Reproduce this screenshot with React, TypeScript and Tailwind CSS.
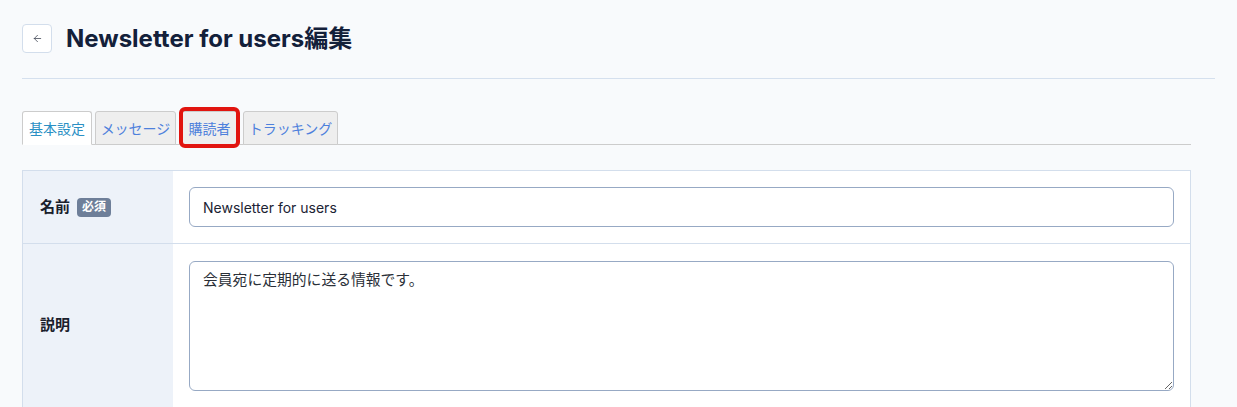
import { ArrowLeft } from 'lucide-react';

const font = { fontFamily: 'Inter, "Noto Sans CJK JP", sans-serif' };

const tabs = [
  { label: '基本設定', w: 'w-[70px]' },
  { label: 'メッセージ', w: 'w-[81px]' },
  { label: '購読者', w: 'w-[61px]' },
  { label: 'トラッキング', w: 'w-[95px]' },
];

export default function App() {
  return (
    <div className="min-h-screen bg-[#f8fafc] text-[#1a2233]" style={font}>
      <div className="px-[22px] pt-[24px]">
        {/* Header */}
        <div className="flex items-center gap-[14px] pb-[25px] border-b border-[#d5e0ee]">
          <button className="w-[30px] h-[29px] flex items-center justify-center bg-white border border-[#d3deec] rounded-[4px]">
            <ArrowLeft className="w-[11px] h-[11px] text-[#333a48]" strokeWidth={1.6} />
          </button>
          <h1 className="text-[24px] font-bold text-[#13203a] tracking-[0px] leading-[29px]">Newsletter for users編集</h1>
        </div>

        <div className="mr-[24px]">
          {/* Tabs */}
          <div className="mt-[32px] flex items-end gap-[3px] border-b border-[#cccccc] h-[34px]">
            {tabs.map((t, i) => (
              <div key={t.label} className={`relative ${t.w}`}>
                {i === 0 ? (
                  <div className="h-[34px] -mb-px flex items-center justify-center bg-white border border-[#cccccc] border-b-white rounded-t-[3px] text-[14px] text-[#2a8fc4]">
                    {t.label}
                  </div>
                ) : (
                  <div className="h-[34px] -mb-px flex items-center justify-center bg-[#eeeeee] border border-[#cccccc] rounded-t-[3px] text-[14px] text-[#4d80dc]">
                    {t.label}
                  </div>
                )}
                {i === 2 && (
                  <span className="absolute -top-[4px] -bottom-[4px] left-0 right-0 border-[4px] border-[#e1140f] rounded-[6px] pointer-events-none" />
                )}
              </div>
            ))}
          </div>

          {/* Form table */}
          <div className="mt-[25px] border border-[#d3deec] bg-white">
            <div className="flex border-b border-[#d3deec]">
              <div className="w-[150px] shrink-0 bg-[#edf2f9] px-[17px] flex items-center gap-[7px]">
                <span className="text-[15px] font-bold text-[#1a202c]">名前</span>
                <span className="h-[19px] px-[5px] flex items-center rounded-[4px] bg-[#6e7f99] text-white text-[12px] font-bold">必須</span>
              </div>
              <div className="flex-1 p-[16px]">
                <input
                  defaultValue="Newsletter for users"
                  className="w-full h-[40px] px-[13px] rounded-[6px] border border-[#97a9c4] bg-white text-[14px] text-[#1b2333] outline-none"
                  style={font}
                />
              </div>
            </div>
            <div className="flex">
              <div className="w-[150px] shrink-0 bg-[#edf2f9] px-[17px] flex items-center">
                <span className="text-[15px] font-bold text-[#1a202c]">説明</span>
              </div>
              <div className="flex-1 p-[16px] pt-[17px]">
                <textarea
                  defaultValue="会員宛に定期的に送る情報です。"
                  className="block w-full h-[130px] px-[13px] py-[8px] rounded-[6px] border border-[#97a9c4] bg-white text-[14.8px] leading-[21px] text-[#2a2f38] outline-none"
                  style={font}
                />
              </div>
            </div>
          </div>
        </div>
      </div>
    </div>
  );
}
